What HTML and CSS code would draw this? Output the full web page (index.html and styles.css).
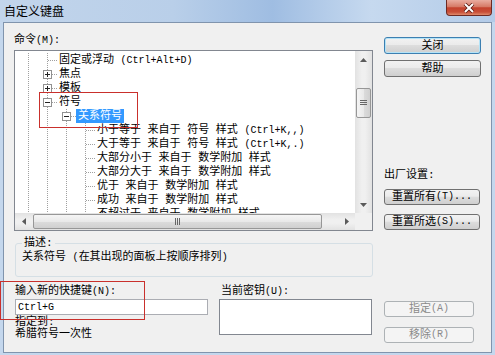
FILE: index.html
```html
<!DOCTYPE html>
<html lang="zh-CN">
  <head>
    <meta charset="UTF-8" />
    <title>自定义键盘</title>
    <link rel="stylesheet" href="styles.css">
  </head>
  <body>
    <div class="window">
      <div class="titlebar">
        <span class="title">自定义键盘</span>
        <button class="close-btn">
          <svg width="12" height="10" viewBox="0 0 12 10">
            <path d="M2 1L10 9M10 1L2 9" stroke="#5a1a12" stroke-width="3.6" />
            <path d="M2 1L10 9M10 1L2 9" stroke="#fff" stroke-width="2" />
          </svg>
        </button>
      </div>

      <div class="client">
        <div class="top">
          <div class="left">
            <div class="label cmd-label">命令<span class="en">(M):</span></div>
            <div class="listbox">
              <div class="list-main">
                <div class="tree">
                  <div class="row"><i class="g"></i><i class="c"></i><span class="txt">固定或浮动 <span class="en">(Ctrl+Alt+D)</span></span></div>
                  <div class="row"><i class="g"></i><i class="c"><b class="box plus"></b></i><span class="txt">焦点</span></div>
                  <div class="row"><i class="g"></i><i class="c"><b class="box plus"></b></i><span class="txt">模板</span></div>
                  <div class="row"><i class="g"></i><i class="c"><b class="box"></b></i><span class="txt">符号</span></div>
                  <div class="row"><i class="g"></i><i class="g"></i><i class="c"><b class="box"></b></i><span class="txt sel">关系符号</span></div>
                  <div class="row"><i class="g"></i><i class="g"></i><i class="g"></i><i class="c"></i><span class="txt">小于等于 来自于 符号 样式 <span class="en">(Ctrl+K,,)</span></span></div>
                  <div class="row"><i class="g"></i><i class="g"></i><i class="g"></i><i class="c"></i><span class="txt">大于等于 来自于 符号 样式 <span class="en">(Ctrl+K,.)</span></span></div>
                  <div class="row"><i class="g"></i><i class="g"></i><i class="g"></i><i class="c"></i><span class="txt">大部分小于 来自于 数学附加 样式</span></div>
                  <div class="row"><i class="g"></i><i class="g"></i><i class="g"></i><i class="c"></i><span class="txt">大部分大于 来自于 数学附加 样式</span></div>
                  <div class="row"><i class="g"></i><i class="g"></i><i class="g"></i><i class="c"></i><span class="txt">优于 来自于 数学附加 样式</span></div>
                  <div class="row"><i class="g"></i><i class="g"></i><i class="g"></i><i class="c"></i><span class="txt">成功 来自于 数学附加 样式</span></div>
                  <div class="row"><i class="g"></i><i class="g"></i><i class="g"></i><i class="c"></i><span class="txt">不超过于 来自于 数学附加 样式</span></div>
                </div>
                <div class="vscroll">
                  <div class="arrow">
                    <svg width="7" height="4"><path d="M0 4L3.5 0L7 4Z" fill="#5b5b5b" /></svg>
                  </div>
                  <div class="track-v">
                    <div class="thumb thumb-v">
                      <svg width="7" height="6"><path d="M0 .5h7M0 2.5h7M0 4.5h7" stroke="#666" /></svg>
                    </div>
                  </div>
                  <div class="arrow">
                    <svg width="7" height="4"><path d="M0 0L3.5 4L7 0Z" fill="#5b5b5b" /></svg>
                  </div>
                </div>
              </div>
              <div class="hrow">
                <div class="hscroll">
                  <div class="arrow">
                    <svg width="4" height="7"><path d="M4 0L0 3.5L4 7Z" fill="#5b5b5b" /></svg>
                  </div>
                  <div class="track-h">
                    <div class="thumb thumb-h">
                      <svg width="6" height="7"><path d="M.5 0v7M2.5 0v7M4.5 0v7" stroke="#666" /></svg>
                    </div>
                  </div>
                  <div class="arrow">
                    <svg width="4" height="7"><path d="M0 0L4 3.5L0 7Z" fill="#5b5b5b" /></svg>
                  </div>
                </div>
                <div class="corner"></div>
              </div>
            </div>
          </div>

          <div class="right">
            <button class="btn btn-default">关闭</button>
            <button class="btn btn-help">帮助</button>
            <div class="label reset-label">出厂设置:</div>
            <button class="btn btn-reset">重置所有<span class="en">(T)...</span></button>
            <button class="btn btn-reset btn-reset2">重置所选<span class="en">(S)...</span></button>
          </div>
        </div>

        <fieldset class="desc">
          <legend>描述:</legend>
          <div class="desc-text">关系符号 <span class="en">(</span>在其出现的面板上按顺序排列<span class="en">)</span></div>
        </fieldset>

        <div class="bottom">
          <div class="col-new">
            <div class="label">输入新的快捷键<span class="en">(N):</span></div>
            <div class="input"><span class="en">Ctrl+G</span></div>
            <div class="small-line">指定到:</div>
            <div class="small-line">希腊符号一次性</div>
          </div>
          <div class="col-cur">
            <div class="label cur-label">当前密钥<span class="en">(U):</span></div>
            <div class="cur-list"></div>
          </div>
          <div class="col-btns">
            <button class="btn btn-off btn-assign">指定<span class="en">(A)</span></button>
            <button class="btn btn-off btn-remove">移除<span class="en">(R)</span></button>
          </div>
        </div>
      </div>

      <div class="mark mark-tree"></div>
      <div class="mark mark-key"></div>
    </div>
  </body>
</html>
```

FILE: styles.css
```css
* {
  box-sizing: border-box;
}
body {
  margin: 0;
  width: 495px;
  height: 355px;
  overflow: hidden;
  background: #c4d7ed;
  font: 11px/14px "Liberation Mono", "Noto Sans CJK SC", monospace;
  color: #000;
}
.en {
  font-size: 10px;
}
.window {
  position: relative;
  width: 495px;
  height: 355px;
}

/* title bar */
.titlebar {
  height: 22px;
  display: flex;
  justify-content: space-between;
  align-items: flex-start;
  padding-left: 4px;
  background: linear-gradient(90deg, #c2d5eb 0%, #b9cfe9 35%, #9fbde2 55%, #c6d9ef 75%, #b3cbe8 100%);
}
.title {
  font: 12px/22px "Noto Sans CJK SC", sans-serif;
}
.close-btn {
  width: 46px;
  height: 16px;
  margin-right: 3px;
  padding: 0;
  border: 1px solid #6d2a23;
  border-top: none;
  border-radius: 0 0 4px 4px;
  background: linear-gradient(#e9aca0, #d67a66 45%, #c4412d 52%, #c84f38 80%, #df8a6c);
  display: flex;
  align-items: center;
  justify-content: center;
}

/* client area */
.client {
  margin: 0 3px;
  height: 331px;
  border: 1px solid #8094ad;
  background: #f0f0f0;
  padding: 10px 0 0 10px;
}
.label {
  height: 14px;
  white-space: nowrap;
}
.top {
  display: grid;
  grid-template-columns: 359px 97px;
  column-gap: 11px;
}
.cmd-label {
  margin-bottom: 3px;
}

/* tree list */
.listbox {
  height: 181px;
  border: 1px solid #828790;
  background: #fff;
  display: flex;
  flex-direction: column;
}
.list-main {
  display: flex;
  height: 162px;
}
.tree {
  width: 340px;
  overflow: hidden;
  padding-top: 2px;
}
.row {
  display: flex;
  height: 14px;
  white-space: nowrap;
}
.g {
  flex: none;
  width: 19px;
  height: 14px;
  background: repeating-linear-gradient(#a0a0a0 0 1px, transparent 1px 2px) 13px 0 / 1px 14px no-repeat;
}
.c {
  flex: none;
  width: 23px;
  height: 14px;
  background:
    repeating-linear-gradient(#a0a0a0 0 1px, transparent 1px 2px) 13px 0 / 1px 14px no-repeat,
    repeating-linear-gradient(90deg, #a0a0a0 0 1px, transparent 1px 2px) 14px 7px / 9px 1px no-repeat;
}
.box {
  display: block;
  width: 9px;
  height: 9px;
  margin: 3px 0 0 9px;
  border: 1px solid #919191;
  background: linear-gradient(#222, #222) center / 5px 1px no-repeat, #fff;
}
.box.plus {
  background:
    linear-gradient(#222, #222) center / 5px 1px no-repeat,
    linear-gradient(#222, #222) center / 1px 5px no-repeat,
    #fff;
}
.txt {
  padding: 0 2px;
  height: 14px;
}
.sel {
  background: #3399ff;
  color: #fff;
}

/* scrollbars */
.vscroll {
  width: 17px;
  display: flex;
  flex-direction: column;
  background: linear-gradient(90deg, #e2e2e2, #f0f0f0 40%, #f0f0f0 60%, #e2e2e2);
}
.arrow {
  flex: none;
  width: 17px;
  height: 17px;
  display: flex;
  align-items: center;
  justify-content: center;
}
.track-v {
  flex: 1;
  padding-top: 20px;
}
.thumb {
  border: 1px solid #979797;
  border-radius: 2px;
  display: flex;
  align-items: center;
  justify-content: center;
}
.thumb-v {
  height: 30px;
  margin: 0 1px;
  background: linear-gradient(90deg, #f5f5f5, #e9e9e9 50%, #dcdcdc 51%, #d0d0d0);
}
.hrow {
  display: flex;
  height: 17px;
}
.hscroll {
  width: 340px;
  display: flex;
  background: linear-gradient(#e2e2e2, #f0f0f0 40%, #f0f0f0 60%, #e2e2e2);
}
.track-h {
  flex: 1;
  padding: 1px 16px 1px 1px;
}
.thumb-h {
  height: 15px;
  background: linear-gradient(#f5f5f5, #e9e9e9 50%, #dcdcdc 51%, #d0d0d0);
}
.corner {
  width: 17px;
  background: #f0f0f0;
}

/* buttons */
.right {
  display: flex;
  flex-direction: column;
  padding-top: 4px;
}
.btn {
  display: flex;
  align-items: center;
  justify-content: center;
  width: 97px;
  height: 17px;
  padding: 0;
  border: 1px solid #707070;
  border-radius: 3px;
  background: linear-gradient(#f2f2f2, #ebebeb 45%, #dddddd 50%, #cfcfcf);
  font: inherit;
  line-height: 14px;
  color: #000;
}
.btn-default {
  border-color: #3c7fb1;
  box-shadow: inset 0 0 0 1px #b4e3f7;
}
.btn-help {
  margin-top: 6px;
}
.reset-label {
  margin-top: 91px;
}
.btn-reset {
  width: 96px;
  height: 16px;
  margin-top: 7px;
}
.btn-reset2 {
  margin-top: 9px;
}
.btn-off {
  width: 90px;
  height: 16px;
  border-color: #adb2b5;
  background: #f4f4f4;
  color: #8a8a8a;
}
.btn-remove {
  margin-top: 10px;
}

/* description group */
.desc {
  margin: 5px 0 0 1px;
  width: 358px;
  height: 41px;
  min-width: 0;
  border: 1px solid #d5dfe5;
  border-radius: 3px;
  padding: 0 6px;
}
.desc legend {
  padding: 0 2px;
  line-height: 14px;
}
.desc-text {
  white-space: nowrap;
}

/* shortcut row */
.bottom {
  display: flex;
  margin: 7px 0 0 1px;
}
.col-new {
  width: 193px;
}
.input {
  height: 16px;
  margin-top: 1px;
  border: 1px solid #abadb3;
  background: #fff;
  padding-left: 2px;
  line-height: 14px;
}
.small-line {
  height: 12px;
  line-height: 12px;
  margin-top: 1px;
  white-space: nowrap;
}
.small-line + .small-line {
  margin-top: 0;
}
.col-cur {
  width: 153px;
  margin-left: 11px;
}
.cur-label {
  padding-left: 2px;
}
.cur-list {
  height: 36px;
  margin-top: 1px;
  border: 1px solid #828790;
  background: #fff;
}
.col-btns {
  margin-left: 12px;
  padding-top: 17px;
}

/* red annotation frames */
.mark {
  position: absolute;
  border: 1px solid #c9302c;
}
.mark-tree {
  left: 39px;
  top: 92px;
  width: 99px;
  height: 36px;
}
.mark-key {
  left: 0;
  top: 281px;
  width: 145px;
  height: 39px;
}
```
